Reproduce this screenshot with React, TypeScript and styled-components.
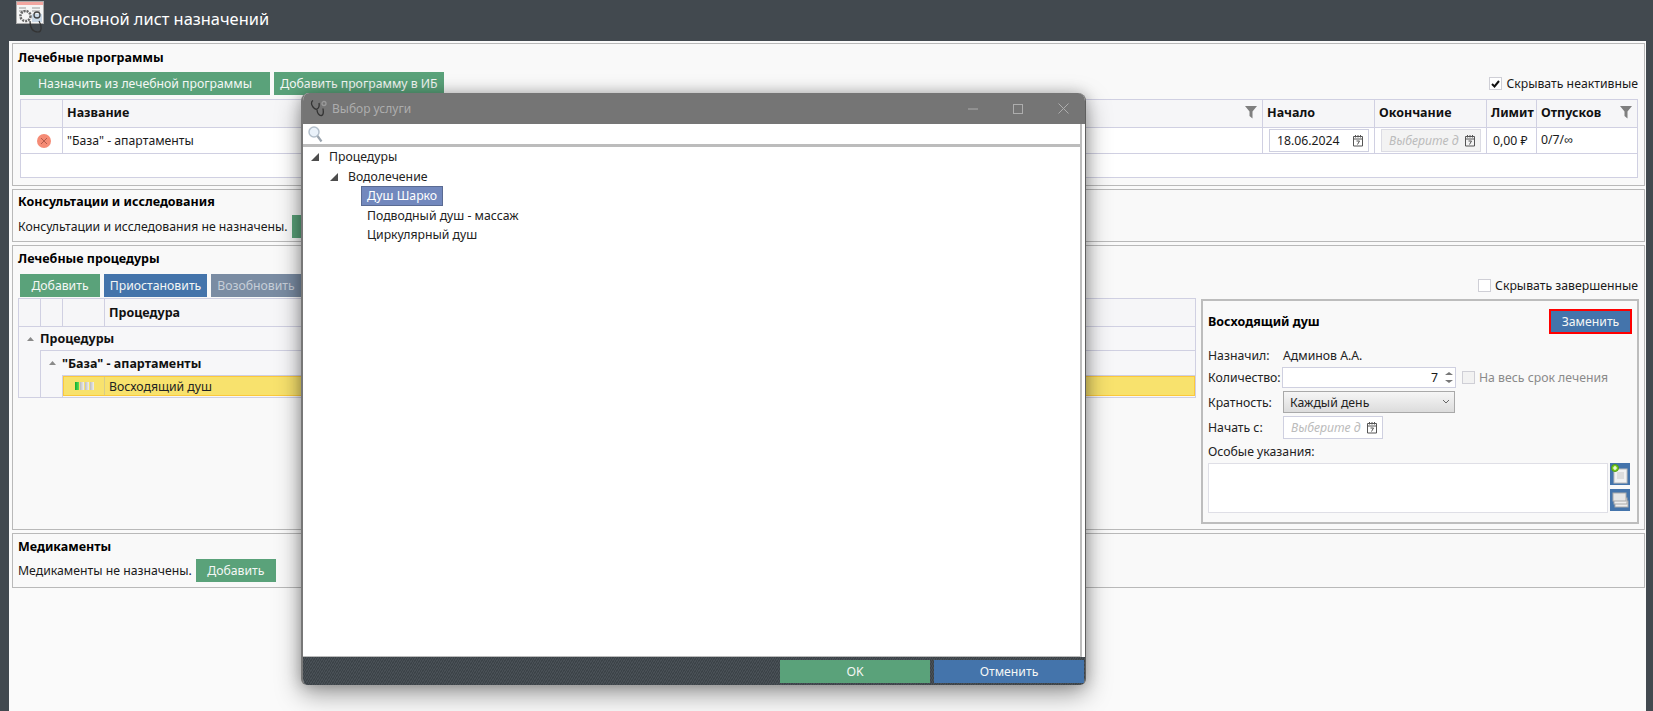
import React from "react";
import styled, { createGlobalStyle } from "styled-components";

const Global = createGlobalStyle`
  html, body { margin: 0; padding: 0; height: 100%; overflow: hidden; }
  body { font-family: "Noto Sans", "Liberation Sans", sans-serif; font-size: 12.25px; color: #1a1a1a; }
  * { box-sizing: border-box; }
`;

const Page = styled.div`
  position: relative; width: 1653px; height: 711px; background: #42494f;
  display: flex; flex-direction: column; overflow: hidden;
`;
const Header = styled.header`
  height: 41px; flex: none; display: flex; align-items: center; gap: 4px; padding: 0 0 5px 16px;
  color: #fff; font-size: 16.4px;
`;
const Main = styled.main`
  flex: 1; margin: 0 7px 0 9px; background: #fafafa; padding: 2px 1px 0 3px;
  display: flex; flex-direction: column; gap: 3px;
`;
const Section = styled.section<{ $h: number }>`
  height: ${p => p.$h}px; flex: none; border: 1px solid #b9b9b9; background: #f9f9f9;
  padding: 0 6px 0 5px; display: flex; flex-direction: column;
`;
const SectionTitle = styled.h3<{ $h?: number }>`
  margin: 0; height: ${p => p.$h ?? 25}px; display: flex; align-items: center; flex: none;
  font-size: 12.5px; font-weight: 700; color: #000;
`;
const Toolbar = styled.div<{ $mt: number }>`
  display: flex; align-items: center; gap: 4px; padding-left: 2px; margin-top: ${p => p.$mt}px; flex: none; height: 23px;
`;
const Spacer = styled.div`flex: 1;`;
const Btn = styled.button<{ $kind?: "green" | "blue" | "muted"; $w: number }>`
  width: ${p => p.$w}px; height: 23px; flex: none; border: 0; padding: 0; margin: 0;
  font: inherit; white-space: nowrap;
  background: ${p => (p.$kind === "blue" ? "#4474ab" : p.$kind === "muted" ? "#7a8ca3" : "#5aa27a")};
  color: ${p => (p.$kind === "muted" ? "#c6ced8" : "#f4f7f5")};
`;
const Check = styled.label<{ $off?: boolean }>`
  display: inline-flex; align-items: center; gap: 4px; white-space: nowrap;
  color: ${p => (p.$off ? "#8a8a8a" : "#1a1a1a")};
`;
const Box = styled.span<{ $off?: boolean }>`
  width: 13px; height: 13px; flex: none; border: 1px solid #cfcfd6;
  background: ${p => (p.$off ? "#f2f2f2" : "#fff")};
  display: inline-flex; align-items: center; justify-content: center;
`;

/* programs table */
const ProgTable = styled.div`
  margin: 4px 0 0 2px; height: 79px; flex: none; background: #fff; border: 1px solid #d0d0e2;
  display: grid;
  grid-template-columns: 42px 1200px 112px 112px 50px 100px;
  grid-template-rows: 28px 26px 1fr;
`;
const HeadCell = styled.div<{ $pad?: number }>`
  background: #f6f6f8; border-right: 1px solid #d0d0e2; border-bottom: 1px solid #d0d0e2;
  display: flex; align-items: center; justify-content: space-between; gap: 2px;
  padding: 0 5px 3px ${p => p.$pad ?? 4}px; font-weight: 700; font-size: 12.5px; color: #111; white-space: nowrap; overflow: hidden;
  &:nth-child(6) { border-right: 0; }
`;
const Cell = styled.div<{ $center?: boolean; $pad?: number }>`
  border-right: 1px solid #d0d0e2; border-bottom: 1px solid #d0d0e2;
  display: flex; align-items: center; padding: 0 0 0 ${p => p.$pad ?? 4}px; white-space: nowrap; overflow: hidden;
  justify-content: ${p => (p.$center ? "center" : "flex-start")};
`;
const InputCell = styled(Cell)`padding: 0 0 0 6px;`;
const LastCell = styled(Cell)`border-right: 0; padding-bottom: 2px;`;
const DateBox = styled.div<{ $off?: boolean; $w?: number }>`
  width: ${p => p.$w ?? 100}px; height: 23px; flex: none; display: flex; align-items: center;
  justify-content: space-between; padding: 0 4px 0 7px;
  border: 1px solid ${p => (p.$off ? "#dcdce4" : "#cfd0e0")};
  background: ${p => (p.$off ? "#f3f3f3" : "#fff")};
`;
const Placeholder = styled.span`font-style: italic; color: #bcbcbc; white-space: nowrap; overflow: hidden;`;
const DangerDot = styled.span`
  width: 14px; height: 14px; border-radius: 50%; background: #f58b75; color: #b35a4b;
  display: flex; align-items: center; justify-content: center;
`;

const InlineRow = styled.div<{ $mt?: number }>`
  display: flex; align-items: center; gap: 4px; height: 23px; flex: none; margin-top: ${p => p.$mt ?? 0}px;
`;
const Para = styled.span`white-space: nowrap;`;

/* procedures */
const ProcBody = styled.div`display: flex; gap: 5px; align-items: flex-start; margin-top: 1px; flex: 1; min-height: 0;`;
const ProcTable = styled.div`
  width: 1178px; flex: none; height: 100px; border: 1px solid #d0d0e2; background: #f7f7f9;
  display: flex; flex-direction: column;
`;
const ProcHead = styled.div`
  height: 28px; flex: none; display: grid; grid-template-columns: 22px 22px 42px 1fr;
  border-bottom: 1px solid #d0d0e2; background: #f6f6f8;
`;
const ProcHeadCell = styled.div`
  border-right: 1px solid #d0d0e2; display: flex; align-items: center; padding: 0 0 1px 4px; font-weight: 700; font-size: 12.5px; color: #111;
  &:last-child { border-right: 0; }
`;
const GroupRow = styled.div<{ $pad: number; $h: number }>`
  height: ${p => p.$h}px; flex: none; display: flex; align-items: center; gap: 6px;
  padding-left: ${p => p.$pad}px; font-weight: 700; font-size: 12.5px; color: #111;
`;
const Nested = styled.div`
  margin-left: 21px; border-left: 1px solid #d0d0e2; border-top: 1px solid #d0d0e2; flex: 1;
  display: flex; flex-direction: column;
`;
const ItemRow = styled.div`
  height: 20px; flex: none; display: grid; grid-template-columns: 41px 1fr; background: #f8e26d;
  border: 1px solid #fcc93c; align-items: stretch;
`;
const ItemGauge = styled.div`display: flex; align-items: center; justify-content: center; gap: 1px; border-right: 1px solid #d8cc88;`;
const GaugeBar = styled.span<{ $on?: boolean }>`
  width: 4px; height: 8px;
  background: ${p => (p.$on ? "linear-gradient(90deg,#0fae2b,#5fdc5a)" : "linear-gradient(90deg,#bdbdbd,#efefef)")};
`;
const ItemName = styled.div`display: flex; align-items: center; padding-left: 4px; color: #222;`;

/* detail */
const Detail = styled.aside`
  width: 438px; height: 225px; flex: none; margin-top: 1px; border: 2px solid #bdbdbd;
  background: #f9f9f9; padding: 8px 5px 0 5px; display: flex; flex-direction: column;
`;
const DetailHead = styled.div`display: flex; align-items: center; justify-content: space-between; height: 25px; flex: none;`;
const DetailTitle = styled.strong`color: #000; font-size: 12.5px;`;
const ReplaceBtn = styled(Btn)`
  height: 25px; border: 2px solid #f00; box-shadow: inset 0 0 0 1px #4474ab;
`;
const Form = styled.div`
  margin-top: 13px; display: grid; grid-template-columns: 75px 1fr; row-gap: 3px; align-items: center; flex: none;
`;
const Label = styled.div`white-space: nowrap; color: #222;`;
const Value = styled.div`height: 17px; display: flex; align-items: center; color: #222;`;
const QtyRow = styled.div`display: flex; align-items: center; gap: 6px;`;
const Spin = styled.div`
  width: 174px; height: 21px; background: #fff; border: 1px solid #cfd0e0; display: flex; align-items: center;
  justify-content: flex-end; padding-right: 2px; gap: 7px; margin-left: -1px;
`;
const SpinArrows = styled.div`display: flex; flex-direction: column; gap: 5px; align-items: center;`;
const Arrow = styled.span<{ $down?: boolean }>`
  width: 0; height: 0; border-left: 4px solid transparent; border-right: 4px solid transparent;
  ${p => (p.$down ? "border-top: 3px solid #777;" : "border-bottom: 3px solid #777;")}
`;
const Select = styled.div`
  width: 172px; height: 22px; display: flex; align-items: center; justify-content: space-between;
  padding: 0 4px 0 6px; border: 1px solid #a9a9a9; background: linear-gradient(#f6f6f6, #dcdcdc); color: #222;
`;
const NoteLabel = styled.div`height: 24px; flex: none; display: flex; align-items: center; color: #222;`;
const NoteRow = styled.div`display: flex; gap: 2px; flex: none; align-items: flex-start;`;
const NoteArea = styled.div`width: 400px; height: 50px; background: #fff; border: 1px solid #dfdfe6;`;
const NoteTools = styled.div`display: flex; flex-direction: column; gap: 4px;`;
const ToolBtn = styled.div`width: 20px; height: 22px; background: #4474ab; display: flex; align-items: center; justify-content: center;`;

/* dialog */
const Dialog = styled.div`
  position: absolute; left: 301px; top: 93px; width: 785px; height: 592px;
  display: flex; flex-direction: column; background: #fff; border-radius: 8px 8px 6px 6px;
  box-shadow: 0 9px 26px rgba(0,0,0,.38), 0 0 14px rgba(0,0,0,.22); overflow: hidden;
  border-right: 1px solid #5f5f5f; border-left: 2px solid #777;
`;
const DialogTitle = styled.div`
  height: 31px; flex: none; background: #757575; display: flex; align-items: center; color: #adadad; font-size: 12px;
  padding: 0 16px 0 7px; gap: 4px;
`;
const WinControls = styled.div`display: flex; align-items: center; gap: 35px; margin-left: auto;`;
const SearchRow = styled.div`
  height: 23px; flex: none; display: flex; align-items: center; padding-left: 5px;
  margin-right: 3px; border-bottom: 3px solid #bcbcbc; border-right: 2px solid #bcbcbc; background: #fff;
`;
const Tree = styled.div`flex: 1; margin-right: 3px; border-right: 2px solid #bcbcbc; border-bottom: 1px solid #bbb; background: #fff;`;
const TreeRow = styled.div<{ $pad: number }>`
  height: 19.5px; display: flex; align-items: center; gap: 10px; padding-left: ${p => p.$pad}px; color: #222;
`;
const Tri = styled.span`
  width: 0; height: 0; border-style: solid; border-width: 0 0 8px 8px; border-color: transparent transparent #4d4d4d transparent;
  margin-top: 1px;
`;
const Selected = styled.span`
  height: 20px; width: 82px; margin-left: -6px; padding-left: 5px; display: flex; align-items: center; flex: none;
  background: #7288bd; border: 1px solid #5a6b93; color: #fff; white-space: nowrap;
`;
const Footer = styled.div`
  height: 28px; flex: none; display: flex; justify-content: flex-end; gap: 4px; padding: 3px 1px 2px 0;
  background: repeating-linear-gradient(-60deg, #3c4348 0 1px, #495056 1px 2px);
`;
const FooterBtn = styled(Btn)``;

const Calendar = () => (
  <svg width="12" height="13" viewBox="0 0 12 13" fill="none" stroke="#555" strokeWidth="1">
    <path d="M1.5 2.5h9v9.5h-9z" />
    <path d="M1.5 5h9" />
    <path d="M3.5 1v2.5M6 1v2.5M8.500 1v2.500" />
    <path d="M4.500 7h3L5.500 10.500" />
  </svg>
);
const Funnel = () => (
  <svg width="12" height="14" viewBox="0 0 12 14" fill="#7f7f7f">
    <path d="M0 1h12L7.500 6.500V13.500L4.500 11V6.500z" />
  </svg>
);
const Tick = () => (
  <svg width="9" height="8" viewBox="0 0 9 8" fill="none" stroke="#111" strokeWidth="2">
    <path d="M1 4l2.500 2.500L8 1" />
  </svg>
);
const Chevron = () => (
  <svg width="8" height="6" viewBox="0 0 8 6" fill="none" stroke="#666" strokeWidth="1">
    <path d="M1 1l3 3 3-3" />
  </svg>
);
const SmallUp = () => (
  <svg width="7" height="4" viewBox="0 0 7 4" fill="#8a8a8a"><path d="M0 4l3.500-4L7 4z" /></svg>
);
const XIcon = () => (
  <svg width="8" height="8" viewBox="0 0 8 8" stroke="currentColor" fill="none"><path d="M1 1l6 6M7 1L1 7" /></svg>
);
const AppIcon = () => (
  <svg width="30" height="34" viewBox="0 0 30 34" fill="none">
    <rect x="0.500" y="0.500" width="27" height="22" fill="#f5f5f5" stroke="#aaa" />
    <rect x="1" y="1" width="26" height="3" fill="#f2a6a0" />
    <path d="M3 7h7M3 10h7M16 7h8M16 10h8" stroke="#999" />
    <rect x="16" y="13" width="10" height="8" fill="#c9d8e6" />
    <circle cx="9.500" cy="15" r="5" stroke="#666" strokeWidth="2.500" strokeDasharray="2 1" />
    <path d="M14 20c0 7 3 11 8 11 4 0 4-6 1-11" stroke="#333" strokeWidth="1.200" />
    <circle cx="21" cy="14" r="3" stroke="#444" strokeWidth="1.300" />
  </svg>
);
const Stetho = () => (
  <svg width="18" height="19" viewBox="0 0 18 19" fill="none" stroke="#333" strokeWidth="1.300">
    <path d="M3 1.500c-2 1-2 4 0 6.500 1.500 2 3 2.500 4 2 2-1 2.500-3.500 2-6" />
    <path d="M7 10.500c0 3 2 6.500 4.500 6 2.500-.5 2-4 1.500-7" />
    <circle cx="14" cy="4.500" r="2" stroke="#9a9a9a" />
  </svg>
);
const Magnifier = () => (
  <svg width="15" height="17" viewBox="0 0 15 17" fill="none">
    <circle cx="6" cy="6" r="5" fill="#eaf2fa" stroke="#b4c0cc" strokeWidth="1.500" />
    <path d="M9.500 10l4 5.500" stroke="#9aa4ae" strokeWidth="2.200" />
  </svg>
);
const AddNote = () => (
  <svg width="20" height="22" viewBox="0 0 20 22">
    <rect x="4" y="6" width="13" height="14" fill="#f1f1f1" stroke="#bbb" />
    <rect x="7" y="9" width="7" height="7" fill="#ddd" />
    <circle cx="5" cy="5" r="3.500" fill="#7ed321" stroke="#4e9a12" />
    <path d="M3 5h4M5 3v4" stroke="#fff" strokeWidth="1.200" />
  </svg>
);
const StackNote = () => (
  <svg width="20" height="22" viewBox="0 0 20 22" fill="#efefef" stroke="#aaa">
    <rect x="5" y="12" width="13" height="6" />
    <rect x="4" y="9" width="13" height="6" />
    <rect x="3" y="4" width="13" height="8" fill="#e6e6e6" />
  </svg>
);
const Min = () => <svg width="10" height="10" viewBox="0 0 10 10" stroke="#adadad"><path d="M0 5h10" /></svg>;
const Max = () => <svg width="10" height="10" viewBox="0 0 10 10" stroke="#adadad" fill="none"><rect x=".5" y=".5" width="9" height="9" /></svg>;
const Close = () => <svg width="11" height="11" viewBox="0 0 11 11" stroke="#adadad" fill="none"><path d="M.500 .500l10 10M10.500 .500l-10 10" /></svg>;

export default function App() {
  return (
    <Page>
      <Global />
      <Header>
        <AppIcon />
        <span>Основной лист назначений</span>
      </Header>
      <Main>
        <Section $h={143}>
          <SectionTitle $h={27}>Лечебные программы</SectionTitle>
          <Toolbar $mt={1}>
            <Btn $w={250}>Назначить из лечебной программы</Btn>
            <Btn $w={170}>Добавить программу в ИБ</Btn>
            <Spacer />
            <Check><Box><Tick /></Box>Скрывать неактивные</Check>
          </Toolbar>
          <ProgTable>
            <HeadCell />
            <HeadCell>Название<Funnel /></HeadCell>
            <HeadCell>Начало</HeadCell>
            <HeadCell>Окончание</HeadCell>
            <HeadCell>Лимит</HeadCell>
            <HeadCell>Отпусков<Funnel /></HeadCell>
            <Cell $center><DangerDot><XIcon /></DangerDot></Cell>
            <Cell>"База" - апартаменты</Cell>
            <InputCell><DateBox>18.06.2024<Calendar /></DateBox></InputCell>
            <InputCell><DateBox $off><Placeholder>Выберите д</Placeholder><Calendar /></DateBox></InputCell>
            <Cell $pad={6}>0,00 ₽</Cell>
            <LastCell>0/7/∞</LastCell>
          </ProgTable>
        </Section>

        <Section $h={53}>
          <SectionTitle $h={23}>Консультации и исследования</SectionTitle>
          <InlineRow $mt={2}>
            <Para>Консультации и исследования не назначены.</Para>
            <Btn $w={80}>Добавить</Btn>
          </InlineRow>
        </Section>

        <Section $h={285}>
          <SectionTitle>Лечебные процедуры</SectionTitle>
          <Toolbar $mt={3}>
            <Btn $w={80}>Добавить</Btn>
            <Btn $w={103} $kind="blue">Приостановить</Btn>
            <Btn $w={90} $kind="muted">Возобновить</Btn>
            <Spacer />
            <Check><Box />Скрывать завершенные</Check>
          </Toolbar>
          <ProcBody>
            <ProcTable>
              <ProcHead>
                <ProcHeadCell />
                <ProcHeadCell />
                <ProcHeadCell />
                <ProcHeadCell>Процедура</ProcHeadCell>
              </ProcHead>
              <GroupRow $pad={8} $h={23}><SmallUp />Процедуры</GroupRow>
              <Nested>
                <GroupRow $pad={8} $h={24}><SmallUp />"База" - апартаменты</GroupRow>
                <Nested>
                  <ItemRow>
                    <ItemGauge>
                      <GaugeBar $on /><GaugeBar /><GaugeBar /><GaugeBar />
                    </ItemGauge>
                    <ItemName>Восходящий душ</ItemName>
                  </ItemRow>
                </Nested>
              </Nested>
            </ProcTable>
            <Detail>
              <DetailHead>
                <DetailTitle>Восходящий душ</DetailTitle>
                <ReplaceBtn $w={83} $kind="blue">Заменить</ReplaceBtn>
              </DetailHead>
              <Form>
                <Label>Назначил:</Label>
                <Value>Админов А.А.</Value>
                <Label>Количество:</Label>
                <QtyRow>
                  <Spin>7<SpinArrows><Arrow /><Arrow $down /></SpinArrows></Spin>
                  <Check $off><Box $off />На весь срок лечения</Check>
                </QtyRow>
                <Label>Кратность:</Label>
                <Select>Каждый день<Chevron /></Select>
                <Label>Начать с:</Label>
                <DateBox $w={100}><Placeholder>Выберите д</Placeholder><Calendar /></DateBox>
              </Form>
              <NoteLabel>Особые указания:</NoteLabel>
              <NoteRow>
                <NoteArea />
                <NoteTools>
                  <ToolBtn><AddNote /></ToolBtn>
                  <ToolBtn><StackNote /></ToolBtn>
                </NoteTools>
              </NoteRow>
            </Detail>
          </ProcBody>
        </Section>

        <Section $h={55}>
          <SectionTitle>Медикаменты</SectionTitle>
          <InlineRow>
            <Para>Медикаменты не назначены.</Para>
            <Btn $w={80}>Добавить</Btn>
          </InlineRow>
        </Section>
      </Main>

      <Dialog>
        <DialogTitle>
          <Stetho />
          <span>Выбор услуги</span>
          <WinControls><Min /><Max /><Close /></WinControls>
        </DialogTitle>
        <SearchRow><Magnifier /></SearchRow>
        <Tree>
          <TreeRow $pad={8}><Tri />Процедуры</TreeRow>
          <TreeRow $pad={27}><Tri />Водолечение</TreeRow>
          <TreeRow $pad={64}><Selected>Душ Шарко</Selected></TreeRow>
          <TreeRow $pad={64}>Подводный душ - массаж</TreeRow>
          <TreeRow $pad={64}>Циркулярный душ</TreeRow>
        </Tree>
        <Footer>
          <FooterBtn $w={150}>OK</FooterBtn>
          <FooterBtn $w={150} $kind="blue">Отменить</FooterBtn>
        </Footer>
      </Dialog>
    </Page>
  );
}
